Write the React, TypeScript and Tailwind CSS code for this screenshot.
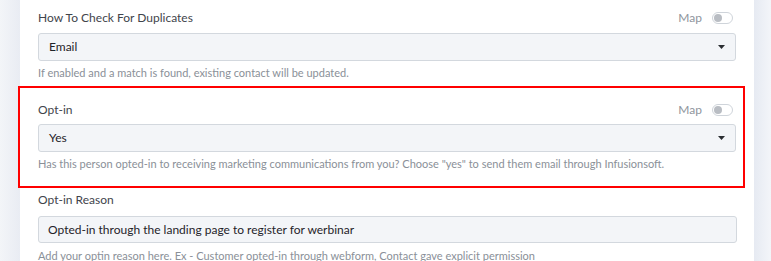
import React from "react";

function Toggle() {
  return (
    <div className="relative h-[12px] w-[21px] rounded-full border border-[#cfd4da] bg-white">
      <div className="absolute left-[1px] top-[1px] h-[8px] w-[8px] rounded-full bg-[#b9bdc3]" />
    </div>
  );
}

function LabelRow({ label, map }: { label: string; map?: boolean }) {
  return (
    <div className="flex h-[20px] items-center justify-between">
      <span className="text-[12px] text-[#3f444b]">{label}</span>
      {map && (
        <div className="mr-[3px] flex items-center gap-[10px]">
          <span className="text-[12px] text-[#8e949c]">Map</span>
          <Toggle />
        </div>
      )}
    </div>
  );
}

function SelectBox({ value }: { value: string }) {
  return (
    <div className="flex h-[28px] items-center justify-between rounded-[3px] border border-[#d3d8de] bg-[#f3f5f8] pl-[10px] pr-[10px]">
      <span className="text-[12px] text-[#1f2329]">{value}</span>
      <svg width="7" height="4" viewBox="0 0 7 4">
        <path d="M0 0 L7 0 L3.5 4 Z" fill="#2a2d31" />
      </svg>
    </div>
  );
}

function Help({ children }: { children: React.ReactNode }) {
  return <div className="h-[16px] text-[11px] leading-[16px] text-[#8a9098]">{children}</div>;
}

export default function App() {
  return (
    <div
      className="flex h-[261px] w-[771px] overflow-hidden bg-white"
      style={{ fontFamily: "Lato, 'Open Sans', sans-serif" }}
    >
      <div className="w-[20px] shrink-0 bg-gradient-to-r from-[#f3f5f8] to-[#e9ecf3]" />
      <div className="w-[734px] shrink-0 bg-white">
        {/* duplicates */}
        <div className="pl-[18px] pr-[18px] pt-[8px]">
          <LabelRow label="How To Check For Duplicates" map />
          <div className="mt-[5px]">
            <SelectBox value="Email" />
          </div>
          <div className="mt-[4px]">
            <Help>If enabled and a match is found, existing contact will be updated.</Help>
          </div>
        </div>

        {/* opt-in, highlighted */}
        <div className="-ml-[2px] mr-[9px] mt-[5px] border-2 border-[#ff0000] pb-[14px] pl-[18px] pr-[7px] pt-[12px]">
          <LabelRow label="Opt-in" map />
          <div className="mt-[4px]">
            <SelectBox value="Yes" />
          </div>
          <div className="mt-[4px]">
            <Help>
              Has this person opted-in to receiving marketing communications from you? Choose "yes" to send them
              email through Infusionsoft.
            </Help>
          </div>
        </div>

        {/* reason */}
        <div className="pl-[18px] pr-[17px] pt-[2px]">
          <LabelRow label="Opt-in Reason" />
          <div className="mt-[6px] flex h-[27px] items-center rounded-[3px] border border-[#d3d8de] bg-[#f3f5f8] pl-[9px]">
            <span className="text-[12px] text-[#1f2329]">Opted-in through the landing page to register for werbinar</span>
          </div>
          <div className="mt-[5px]">
            <Help>Add your optin reason here. Ex - Customer opted-in through webform, Contact gave explicit permission</Help>
          </div>
        </div>
      </div>
      <div className="flex-1 bg-gradient-to-r from-[#e6eaf2] to-[#f3f5f9]" />
    </div>
  );
}
